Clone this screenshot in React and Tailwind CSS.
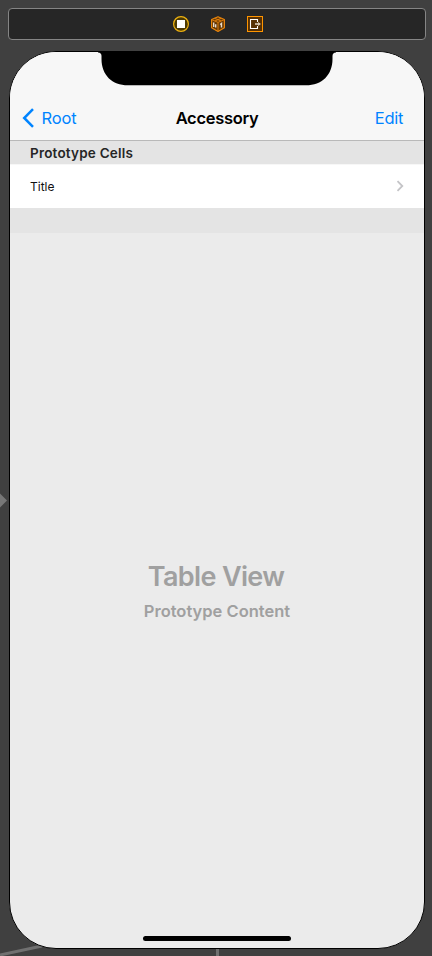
function SceneDock() {
  return (
    <div className="mt-2 ml-2 flex h-8 w-[418px] shrink-0 items-center justify-center gap-[21px] rounded-[4px] border border-[#858585] bg-[#262626] pl-[2px]">
      <svg width="16" height="16" viewBox="0 0 16 16">
        <circle cx="8" cy="8" r="7.4" fill="#4c3a05" stroke="#f0b310" strokeWidth="1.2" />
        <rect x="4" y="4" width="8" height="8" fill="#fff" />
      </svg>
      <svg width="16" height="16" viewBox="0 0 16 16">
        <path d="M8 .8 14.4 3.5V11.8L8 15.4 1.6 11.8V3.5Z" fill="#653804" stroke="#e8850c" strokeWidth="1.2" strokeLinejoin="round" />
        <path d="M1.6 3.6 8 6.4 14.4 3.6M8 6.4V15M4.5 2.3 11.2 5M11.2 2.3 4.8 5" fill="none" stroke="#dc7c0c" />
        <path d="M3.7 6.5V11M5.7 8.2V11.6M10.2 8.6 11.5 7.5V11.5" fill="none" stroke="#e9dccb" strokeWidth="1.4" />
      </svg>
      <svg width="16" height="16" viewBox="0 0 16 16">
        <rect x=".5" y=".5" width="15" height="15" fill="#573104" stroke="#ff9500" />
        <path d="M10.5 6V3.5H3.5V12.5H10.5V10" fill="none" stroke="#fff" strokeWidth="1.1" />
        <path d="M8 8H13" stroke="#d7c9b6" strokeWidth="1.6" />
        <path d="M11 6 14 8 11 10Z" fill="#d7c9b6" />
      </svg>
    </div>
  );
}

function NavigationBar() {
  return (
    <header className="grid h-[89px] shrink-0 grid-cols-3 items-end border-b border-[#b9b9b9] bg-[#f7f7f7] pr-[21px] pl-3 pb-[10px] text-[16.5px] leading-6">
      <div className="flex items-center text-[#0084ff]">
        <svg width="13" height="20" viewBox="0 0 13 20" fill="none">
          <path d="M11 1.2 2.2 10 11 18.8" stroke="currentColor" strokeWidth="2.5" />
        </svg>
        <span className="ml-[6.5px] tracking-[-0.1px]">Root</span>
      </div>
      <h1 className="pl-[9px] text-center font-semibold tracking-[-0.3px] whitespace-nowrap text-black">Accessory</h1>
      <span className="text-right tracking-[-0.3px] text-[#0084ff]">Edit</span>
    </header>
  );
}

function Notch() {
  return (
    <svg className="absolute top-0 left-[87px]" width="240" height="34" viewBox="0 0 240 34">
      <path d="M1 0H239V.5Q235.5 .5 235.5 4V7C235.5 23 225 33.3 209 33.3H31C15 33.3 4.5 23 4.5 7V4Q4.5 .5 1 .5Z" fill="#000" />
    </svg>
  );
}

export default function App() {
  return (
    <main className="relative flex h-[956px] w-[432px] flex-col overflow-hidden bg-[#404040] font-['Inter','Liberation_Sans',sans-serif]">
      <svg className="absolute top-0 left-0" width="432" height="956">
        <path d="M0 493.5 7 500.5 0 507.5Z" fill="#777" />
        <path d="M0 955 42 946M217.5 948V956" stroke="#707070" strokeWidth="3" fill="none" />
      </svg>
      <SceneDock />
      <section className="relative mt-[11px] ml-[9px] flex h-[898px] w-[416px] shrink-0 flex-col overflow-hidden rounded-[47px] border border-black bg-[#ebebeb]">
        <NavigationBar />
        <div className="flex h-[23px] shrink-0 items-center bg-[#e4e4e4] pt-px pl-5 text-[13.5px] font-semibold tracking-[0.2px] text-[#262626]">Prototype Cells</div>
        <div className="flex h-11 shrink-0 items-center justify-between border-t border-[#f7f7f7] bg-white pr-5 pl-5 text-[12px] text-[#111]">
          <span>Title</span>
          <svg className="mb-px" width="8" height="12" viewBox="0 0 8 12" fill="none">
            <path d="M1.5 1.2 6.3 6 1.5 10.8" stroke="#c4c4c7" strokeWidth="1.8" />
          </svg>
        </div>
        <div className="h-[25px] shrink-0 bg-[#e4e4e4]" />
        <div className="flex flex-1 flex-col items-center pt-[326px] text-[#a0a0a0]">
          <div className="pr-[2px] text-[27px] leading-9 font-semibold tracking-[-0.65px]">Table View</div>
          <div className="mt-1 text-[16.5px] leading-6 font-semibold">Prototype Content</div>
        </div>
        <div className="mx-auto mb-[7px] h-[5px] w-[148px] shrink-0 rounded-full bg-black" />
        <Notch />
      </section>
    </main>
  );
}
